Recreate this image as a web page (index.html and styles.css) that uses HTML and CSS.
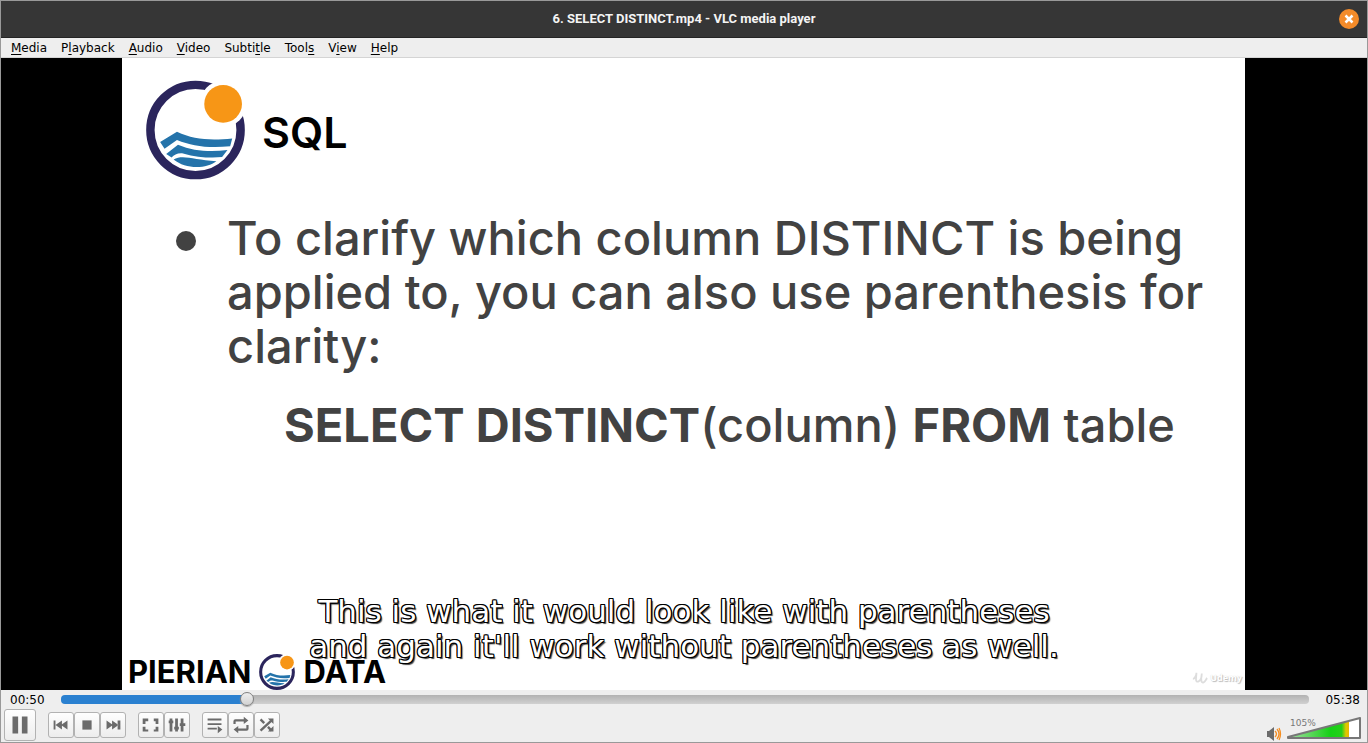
FILE: index.html
```html
<!DOCTYPE html>
<html lang="en">
<head>
<meta charset="utf-8">
<title>6. SELECT DISTINCT.mp4 - VLC media player</title>
<link rel="stylesheet" href="styles.css">
</head>
<body>
<svg class="defs" aria-hidden="true">
  <symbol id="pierian" viewBox="48 33 294 295">
    <circle class="ring" cx="195" cy="180.500" r="134" fill="none" stroke="#2b255c"/>
    <circle cx="277" cy="103" r="69" fill="#fff"/>
    <circle cx="277" cy="103" r="56" fill="#f79616"/>
    <g fill="#2473aa">
      <path d="M90 216L140 186C190 210 240 212 304 206L298 229C230 235 185 228 140 210L103 236Z"/>
      <path d="M108 252L143 224C190 244 240 246 290 240L274 261C240 264 200 262 158 250C142 248 132 254 124 262Z"/>
      <path d="M130 268C158 252 190 270 257 273C228 296 166 298 130 268Z"/>
    </g>
  </symbol>
</svg>
<div class="window">
  <header class="titlebar">
    <h1 class="title">6. SELECT DISTINCT.mp4 - VLC media player</h1>
    <button class="close" aria-label="Close"><svg viewBox="0 0 20 20"><path d="M6.500 6.500l7 7M13.500 6.500l-7 7" stroke="#fff" stroke-width="2.500"/></svg></button>
  </header>
  <nav class="menubar">
    <button><u>M</u>edia</button>
    <button>P<u>l</u>ayback</button>
    <button><u>A</u>udio</button>
    <button><u>V</u>ideo</button>
    <button>Subti<u>t</u>le</button>
    <button>Tool<u>s</u></button>
    <button>V<u>i</u>ew</button>
    <button><u>H</u>elp</button>
  </nav>
  <main class="video">
    <section class="slide">
      <div class="slide-head">
        <svg class="logo"><use href="#pierian"/></svg>
        <h2 class="topic">SQL</h2>
      </div>
      <ul class="points">
        <li>To clarify which column DISTINCT is being<br>applied to, you can also use parenthesis for<br>clarity:</li>
      </ul>
      <p class="query"><b>SELECT DISTINCT</b>(column) <b>FROM</b> table</p>
      <div class="slide-foot">
        <div class="brand"><span>PIERIAN</span><svg class="logo-small"><use href="#pierian"/></svg><span>DATA</span></div>
        <div class="udemy"><svg viewBox="0 0 18 16"><path d="M1 9C3 9 5 5 5 2C5 7 3 13 7 12C10 11 11 6 11 3C10 9 10 14 13 13C15 12 16 9 17 8"/></svg><span>Udemy</span></div>
      </div>
    </section>
    <p class="subtitle">This is what it would look like with parentheses<br>and again it'll work without parentheses as well.</p>
  </main>
  <footer class="controls">
    <div class="seek-row">
      <span class="time">00:50</span>
      <input class="seek" type="range" min="0" max="338" value="49" aria-label="Position" style="--played:14.800%">
      <span class="time">05:38</span>
    </div>
    <div class="button-row">
      <button class="play" aria-label="Pause"><svg viewBox="0 0 32 32"><path d="M8 7h6v18H8zM18 7h6v18h-6z"/></svg></button>
      <div class="group">
        <button aria-label="Previous"><svg viewBox="0 0 26 26"><path d="M5 8h2v10H5zM14 8v10l-7-5zM20 8v10l-7-5z"/></svg></button>
        <button aria-label="Stop"><svg viewBox="0 0 26 26"><path d="M8 8h10v10H8z"/></svg></button>
        <button aria-label="Next"><svg viewBox="0 0 26 26"><path d="M6 8v10l7-5zM12 8v10l7-5zM18 8h3v10h-3z"/></svg></button>
      </div>
      <div class="group">
        <button aria-label="Fullscreen"><svg viewBox="0 0 26 26"><path d="M4 6h6v3H7v3H4zM16 6h5v6h-3V9h-2zM4 15h3v3h3v2H4zM18 15h3v5h-5v-2h2z"/></svg></button>
        <button aria-label="Extended settings"><svg viewBox="0 0 26 26"><path d="M5 6h3v14H5zM11 6h3v14h-3zM17 6h3v14h-3zM4 8h5v3H4zM10 15h5v3h-5zM16 11h6v3h-6z"/></svg></button>
      </div>
      <div class="group">
        <button aria-label="Playlist"><svg viewBox="0 0 26 26"><path d="M5 6h15v2H5zM5 11h15v2H5zM5 16h10v2H5zM16 14l5 4-5 4z"/></svg></button>
        <button aria-label="Loop"><svg viewBox="0 0 26 26"><path d="M6 12V9q0-1 1-1h11M20 13v4q0 1-1 1H8" fill="none" stroke="#6b6b6b" stroke-width="2.400"/><path d="M16 4l5 4-5 4zM10 14l-5 4 5 4z"/></svg></button>
        <button aria-label="Random"><svg viewBox="0 0 26 26"><path d="M6 7l4 4M14 15l4 4M6 19L18 8" fill="none" stroke="#6b6b6b" stroke-width="2.600"/><path d="M14 6h6v6zM20 14v6h-6z"/></svg></button>
      </div>
      <div class="volume">
        <button class="mute" aria-label="Mute"><svg viewBox="0 0 16 14"><path d="M1 4h2l5-4v14l-5-4H1z"/><path d="M9 4q3 3 0 6M11 2q4 5 0 10M13 1q3 6 0 12" fill="none" stroke="#f58d20" stroke-width="1.300"/></svg></button>
        <div class="level">
          <svg viewBox="0 0 74 24">
            <defs><linearGradient id="vol"><stop offset="0" stop-color="#a8dfa8"/><stop offset=".700" stop-color="#16d016"/><stop offset=".880" stop-color="#25cf18"/><stop offset=".950" stop-color="#e0c800"/><stop offset="1" stop-color="#e8b800"/></linearGradient></defs>
            <path d="M1 20L73 1V21H1z" fill="#fff"/>
            <path d="M1 20L62 4V21H1z" fill="url(#vol)"/>
            <path d="M1 20L73 1V21H1z" fill="none" stroke="#777" stroke-width="2" stroke-linejoin="round"/>
          </svg>
          <label class="percent" for="volume">105%</label>
          <input id="volume" type="range" min="0" max="125" value="105">
        </div>
      </div>
    </div>
  </footer>
</div>
</body>
</html>
```

FILE: styles.css
```css
* { box-sizing: border-box; }
body { margin: 0; font: 12px/18px "DejaVu Sans", sans-serif; color: #000; }
h1, h2, p, ul { margin: 0; padding: 0; }
button { font: inherit; color: inherit; margin: 0; padding: 0; border: 0; background: none; }
svg { display: block; }
.defs { position: absolute; width: 0; height: 0; }

.window { display: flex; flex-direction: column; height: 100vh; border: 1px solid #999; background: #eee; }

.titlebar { display: grid; grid-template-columns: 1fr auto 1fr; align-items: center; height: 37px; padding: 0 8px; background: #363636; border-bottom: 1px solid #242424; }
.title { grid-column: 2; font: 700 13px/20px Roboto, sans-serif; color: #f4f4f4; }
.close { justify-self: end; width: 20px; height: 20px; border-radius: 50%; background: #f48b29; }

.menubar { display: flex; gap: 14px; height: 20px; padding: 0 10px; border-bottom: 1px solid #d4d4d4; }
.menubar u { text-underline-offset: 2px; }

.video { position: relative; display: flex; justify-content: center; flex: 1; min-height: 0; padding-right: 1px; background: #000; }
.slide { display: flex; flex-direction: column; height: 100%; aspect-ratio: 1123 / 632; background: #fff; color: #424242; font: 500 47px/54px Inter, sans-serif; }
.slide-head { display: flex; align-items: center; gap: 17px; padding: 22px 24px 0; }
.logo { width: 99px; height: 100px; }
.ring { stroke-width: 25px; }
.logo-small { --ring: 16px; }
.topic { padding-top: 4px; font: 600 43px/54px Inter, sans-serif; color: #000; }
.points { list-style: none; padding: 31px 0 0 54px; white-space: nowrap; }
.points li { display: grid; grid-template-columns: 20px 1fr; column-gap: 31px; }
.points li::before { content: ""; width: 20px; height: 20px; margin-top: 20px; border-radius: 50%; background: #424242; }
.query { padding: 25px 0 0 162px; white-space: nowrap; }
.slide-foot { display: flex; justify-content: space-between; align-items: flex-end; margin-top: auto; padding: 0 3px 0 6px; }
.brand { display: flex; align-items: center; gap: 8px; font: 700 31px/36px Inter, sans-serif; color: #000; }
.logo-small { width: 36px; height: 36px; }
.udemy { display: flex; align-items: center; gap: 2px; padding-bottom: 4px; font: 700 9px/16px "Open Sans", sans-serif; color: #fff; text-shadow: 1px 1px 1px #bbb, 0 0 1px #ccc; }
.udemy svg { width: 16px; height: 16px; fill: none; stroke: #ddd; stroke-width: 2; }
.subtitle { position: absolute; left: 0; right: 0; bottom: 26px; text-align: center; font-size: 31px; line-height: 35px; color: #fff; text-shadow: -1px -1px 0 #000, 1px -1px 0 #000, -1px 1px 0 #000, 1px 1px 0 #000, 0 -1px 0 #000, 0 1px 0 #000, -1px 0 0 #000, 1px 0 0 #000, 2px 2px 1px #444; }

.controls { padding-bottom: 1px; }
.seek-row { display: flex; align-items: center; gap: 16px; height: 19px; padding: 0 7px 0 9px; }
.seek { --played: 0%; flex: 1; min-width: 0; height: 16px; margin: 0; appearance: none; background: none; }
.seek::-webkit-slider-runnable-track { height: 9px; border-radius: 4px; background: linear-gradient(90deg, #2a80d0 var(--played), transparent var(--played)), linear-gradient(#b2b2b2, #d0d0d0); }
.seek::-webkit-slider-thumb { appearance: none; width: 14px; height: 14px; margin-top: -3px; border: 1px solid #808080; border-radius: 50%; background: linear-gradient(#eee, #d2d2d2); box-shadow: 0 1px 1px #aaa; }

.button-row { display: flex; align-items: center; gap: 12px; padding: 0 6px 0 3px; }
.button-row svg { fill: #6b6b6b; }
.play, .group button { width: 26px; height: 26px; border: 1px solid #b2b2b2; border-radius: 3px; background: linear-gradient(#fefefe, #ededed); }
.play { width: 32px; height: 32px; }
.play svg, .group svg { width: 100%; height: 100%; overflow: visible; }
.group { display: flex; }
.volume { display: flex; align-items: flex-end; align-self: flex-end; gap: 5px; margin-left: auto; }
.mute { width: 16px; height: 14px; }
.level { position: relative; width: 74px; height: 24px; }
.percent { position: absolute; left: 3px; top: 0; font-size: 9px; line-height: 12px; color: #777; }
.level input { position: absolute; inset: 0; width: 100%; height: 100%; margin: 0; opacity: 0; }
```
